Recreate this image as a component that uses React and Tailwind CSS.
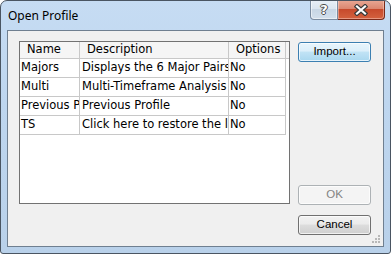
import React from "react";

const rows = [
  { name: "Majors", desc: "Displays the 6 Major Pairs", opt: "No" },
  { name: "Multi", desc: "Multi-Timeframe Analysis", opt: "No" },
  { name: "Previous Profile", desc: "Previous Profile", opt: "No" },
  { name: "TS", desc: "Click here to restore the layout", opt: "No" },
];

const tableFont = { fontFamily: "Tahoma, 'DejaVu Sans', sans-serif" };

const CloseGlyph = () => (
  <svg width="16" height="12" viewBox="0 0 16 12">
    <path d="M4 2.5 L12 9.5 M12 2.5 L4 9.5" stroke="#3a3a3a" strokeWidth="4.5" strokeLinecap="square" />
    <path d="M4 2.5 L12 9.5 M12 2.5 L4 9.5" stroke="#ffffff" strokeWidth="2.2" strokeLinecap="square" />
  </svg>
);

const SizeGrip = () => (
  <svg width="8" height="8" viewBox="0 0 8 8">
    <rect x="6" y="0" width="2" height="2" fill="#b8b8b8" />
    <rect x="3" y="3" width="2" height="2" fill="#b8b8b8" />
    <rect x="6" y="3" width="2" height="2" fill="#b8b8b8" />
    <rect x="0" y="6" width="2" height="2" fill="#b8b8b8" />
    <rect x="3" y="6" width="2" height="2" fill="#b8b8b8" />
    <rect x="6" y="6" width="2" height="2" fill="#b8b8b8" />
  </svg>
);

const Button = ({ children, variant }) => {
  const styles = {
    focus:
      "border-[#3c7fb1] bg-[linear-gradient(#e8f5fc,#dceffa_45%,#c1e3f5_50%,#a9d7ef)] text-black",
    normal:
      "border-[#707070] bg-[linear-gradient(#f2f2f2,#ebebeb_45%,#dddddd_50%,#cfcfcf)] text-black",
    disabled: "border-[#adb2b5] bg-[#f4f4f4] text-[#838383]",
  };
  return (
    <div
      className={`h-[20px] w-[73px] flex items-center justify-center rounded-[3px] border shadow-[inset_0_0_0_1px_rgba(255,255,255,0.7)] text-[11.5px] ${styles[variant]}`}
      style={{ fontFamily: "'Liberation Sans', Arial, sans-serif" }}
    >
      {children}
    </div>
  );
};

export default function App() {
  return (
    <div className="w-[391px] h-[254px] flex flex-col rounded-t-[7px] rounded-b-[3px] border border-[#4a5562] bg-[linear-gradient(#c6dcf3,#bed6ef_40%,#b9d1ea)] overflow-hidden">
      <div className="h-[29px] flex items-start">
        <span
          className="ml-[7px] mt-[7px] text-[12px] leading-[16px] text-black"
          style={{ fontFamily: "'Noto Sans', 'Open Sans', sans-serif" }}
        >
          Open Profile
        </span>
        <div className="ml-auto mr-[5px] -mt-px flex h-[20px]">
          <div className="w-[28px] h-full flex items-center justify-center rounded-bl-[4px] border border-[#7a8ba0] border-t-0 bg-[linear-gradient(#e8eff7,#dbe5f0_45%,#c8d6e5_50%,#d3dfec)] shadow-[inset_0_0_0_1px_rgba(255,255,255,0.5)]">
            <span
              className="text-[13px] font-bold leading-none text-white"
              style={{
                fontFamily: "'DejaVu Sans', sans-serif",
                textShadow:
                  "1px 0 0 #4a4a4a, -1px 0 0 #4a4a4a, 0 1px 0 #4a4a4a, 0 -1px 0 #4a4a4a",
              }}
            >
              ?
            </span>
          </div>
          <div className="w-[47px] h-full flex items-center justify-center rounded-br-[4px] border border-[#7a2a1a] border-t-0 border-l-0 bg-[linear-gradient(#e9a996,#db8770_45%,#c74a2c_50%,#d4623f)] shadow-[inset_0_0_0_1px_rgba(255,220,210,0.45)]">
            <CloseGlyph />
          </div>
        </div>
      </div>

      <div className="flex-1 mx-[6px] mb-[6px] border border-[#6f7f90] bg-[#f0f0f0] relative">
        <div className="flex pl-[11px] pt-[10px]">
          <div className="w-[271px] h-[163px] border border-[#727272] bg-white overflow-hidden" style={tableFont}>
            <div className="flex h-[17px] bg-[#f5f5f5] border-b border-[#c8c8c8] text-[11.5px] text-black">
              <div className="w-[60px] border-r border-[#c8c8c8] pl-[7px] flex items-center">Name</div>
              <div className="w-[149px] border-r border-[#c8c8c8] pl-[7px] flex items-center">Description</div>
              <div className="w-[57px] border-r border-[#c8c8c8] pl-[7px] flex items-center">Options</div>
              <div className="flex-1" />
            </div>
            {rows.map((r) => (
              <div key={r.name} className="flex h-[19px] text-[11.5px] text-black">
                <div className="w-[60px] border-r border-b border-[#c8c8c8] pl-[1px] flex items-center overflow-hidden whitespace-nowrap">
                  {r.name}
                </div>
                <div className="w-[149px] border-r border-b border-[#c8c8c8] pl-[2px] flex items-center overflow-hidden whitespace-nowrap">
                  {r.desc}
                </div>
                <div className="w-[57px] border-r border-b border-[#c8c8c8] pl-[1px] flex items-center overflow-hidden whitespace-nowrap">
                  {r.opt}
                </div>
              </div>
            ))}
          </div>

          <div className="ml-[8px] mt-px h-[193px] flex flex-col">
            <Button variant="focus">Import...</Button>
            <div className="mt-auto">
              <Button variant="disabled">OK</Button>
            </div>
            <div className="mt-[10px]">
              <Button variant="normal">Cancel</Button>
            </div>
          </div>
        </div>
        <div className="absolute right-[3px] bottom-[3px]">
          <SizeGrip />
        </div>
      </div>
    </div>
  );
}
